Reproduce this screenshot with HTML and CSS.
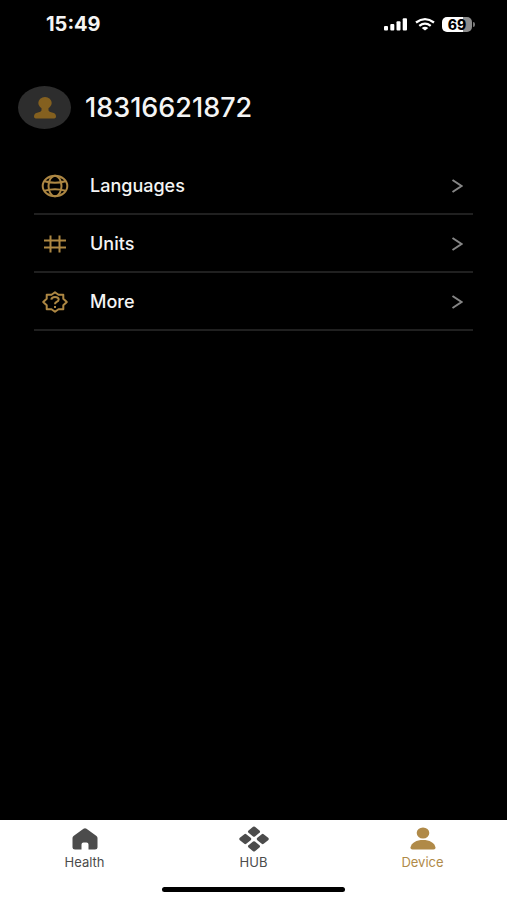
FILE: index.html
```html
<!DOCTYPE html>
<html lang="en">
<head>
<meta charset="utf-8">
<meta name="viewport" content="width=device-width, initial-scale=1">
<title>Device</title>
<link rel="stylesheet" href="styles.css">
</head>
<body>
<div class="app">
  <header class="status">
    <time class="clock">15:49</time>
    <div class="indicators">
      <svg width="25" height="14" viewBox="0 0 25 14" fill="#fff" aria-hidden="true"><rect x="1" y="9" width="4" height="4.500" rx="1"/><rect x="7.300" y="7" width="4" height="6.500" rx="1"/><rect x="13.500" y="4.300" width="4" height="9.200" rx="1"/><rect x="19.700" y="1.300" width="4.300" height="12.200" rx="1"/></svg>
      <svg width="20" height="14" viewBox="0 0 20 14" fill="none" stroke="#fff" stroke-width="2.300" aria-hidden="true"><path d="M1 5.500Q10-1.300 19 5.500"/><path d="M4.300 8.800Q10 4.400 15.700 8.800"/><path d="M10 13.600L6.700 10.900Q10 8.600 13.300 10.900Z" fill="#fff" stroke="none"/></svg>
      <div class="battery"><span class="level">69</span><i class="cap"></i></div>
    </div>
  </header>

  <main class="content">
    <section class="profile">
      <div class="avatar">
        <svg width="24" height="24" viewBox="0 0 24 24" fill="#84601f" aria-hidden="true"><ellipse cx="12" cy="7" rx="6.700" ry="6"/><path d="M8.500 10H15.500V14.500Q16 16 19 16.500Q23 17.200 23 20.500Q23 22.500 20 22.500H4Q1 22.500 1 20.500Q1 17.200 5 16.500Q8 16 8.500 14.500Z"/></svg>
      </div>
      <h1 class="account">18316621872</h1>
    </section>

    <nav class="menu" aria-label="Settings">
      <a class="row" href="#languages">
        <svg class="icon" width="28" height="24" viewBox="0 0 28 24" aria-hidden="true"><ellipse cx="14" cy="12" rx="12.300" ry="10.300"/><ellipse cx="14" cy="12" rx="6.500" ry="10.300"/><path d="M3.500 7.300Q14 10.300 24.500 7.300M3.500 16.700Q14 13.700 24.500 16.700"/></svg>
        <span class="label">Languages</span>
        <svg class="chevron" width="12" height="14" viewBox="0 0 12 14" aria-hidden="true"><path d="M1.500 1L10.500 7L1.500 13"/></svg>
      </a>
      <a class="row" href="#units">
        <svg class="icon" width="28" height="24" viewBox="0 0 28 24" aria-hidden="true"><path d="M9.500 3.500V20.500M18.500 3.500V20.500M3 8.500H25M3 15.500H25"/></svg>
        <span class="label">Units</span>
        <svg class="chevron" width="12" height="14" viewBox="0 0 12 14" aria-hidden="true"><path d="M1.500 1L10.500 7L1.500 13"/></svg>
      </a>
      <a class="row" href="#more">
        <svg class="icon" width="28" height="24" viewBox="0 0 28 24" stroke-linejoin="round" aria-hidden="true"><path d="M14 2.300L17.500 4.700H22.300V8.800L25.800 12L22.300 15.200V19.300H17.500L14 21.700L10.500 19.300H5.700V15.200L2.200 12L5.700 8.800V4.700H10.500Z"/><path d="M10.300 9.700Q10.600 7 14 7Q17.700 7 17.700 9.600Q17.700 11.200 15.500 12Q14 12.600 14 14.200M14 16V18"/></svg>
        <span class="label">More</span>
        <svg class="chevron" width="12" height="14" viewBox="0 0 12 14" aria-hidden="true"><path d="M1.500 1L10.500 7L1.500 13"/></svg>
      </a>
    </nav>
  </main>

  <footer class="dock">
    <nav class="tabs" aria-label="Main">
      <a class="tab" href="#health">
        <svg width="28" height="24" viewBox="0 0 28 24" aria-hidden="true"><path d="M12.500 1.800Q14 .6 15.500 1.800L25.500 9Q26.500 9.800 26.500 11V20.500Q26.500 22.500 24 22.500H17.500V17.500Q17.500 15.500 15.500 15.500H12.500Q10.500 15.500 10.500 17.500V22.500H4Q1.500 22.500 1.500 20.500V11Q1.500 9.800 2.500 9Z"/></svg>
        <span>Health</span>
      </a>
      <a class="tab" href="#hub">
        <svg width="30" height="26" viewBox="0 0 30 26" stroke-width="3" stroke-linejoin="round" stroke="currentColor" aria-hidden="true"><path d="M15 2L19.500 5.700L15 9.300L10.500 5.700ZM6.300 9.300L10.700 13L6.300 16.700L1.800 13ZM23.700 9.300L28.200 13L23.700 16.700L19.300 13ZM15 16.700L19.500 20.300L15 24L10.500 20.300Z"/></svg>
        <span>HUB</span>
      </a>
      <a class="tab active" href="#device" aria-current="page">
        <svg width="28" height="24" viewBox="0 0 28 24" aria-hidden="true"><ellipse cx="14" cy="6" rx="6.300" ry="5.500"/><path d="M1.500 20.500C2.500 15.500 7.500 13 14 13S25.500 15.500 26.500 20.500Q26.800 22.500 24.500 22.500H3.500Q1.200 22.500 1.500 20.500Z"/></svg>
        <span>Device</span>
      </a>
    </nav>
    <div class="home-bar"></div>
  </footer>
</div>
</body>
</html>
```
FILE: styles.css
```css
* {
  box-sizing: border-box;
}

body {
  margin: 0;
  background: #000;
  color: #f4f4f4;
  font-family: Inter, "Liberation Sans", sans-serif;
}

a {
  color: inherit;
  text-decoration: none;
}

svg {
  display: block;
  flex: none;
}

.app {
  display: flex;
  flex-direction: column;
  min-height: 100vh;
}

.status {
  display: flex;
  align-items: center;
  justify-content: space-between;
  height: 48px;
  padding: 0 32px 0 46px;
}

.clock {
  font-size: 20px;
  font-weight: 700;
  line-height: 24px;
}

.indicators {
  display: flex;
  align-items: center;
  gap: 7px;
}

.battery {
  display: flex;
  align-items: center;
  gap: 1px;
}

.level {
  width: 30px;
  border-radius: 5px;
  background: linear-gradient(90deg, #fff 69%, #8c8c8c 69%);
  color: #000;
  font-size: 14px;
  font-weight: 800;
  line-height: 15px;
  text-align: center;
}

.cap {
  width: 2px;
  height: 5px;
  border-radius: 0 2px 2px 0;
  background: #777;
}

.content {
  flex: 1;
  padding: 38px 34px 0;
}

.profile {
  display: flex;
  align-items: center;
  gap: 14px;
  margin-left: -16px;
}

.avatar {
  display: grid;
  place-items: center;
  width: 53px;
  height: 43px;
  border-radius: 50%;
  background: #2d2d2d;
}

.account {
  margin: 0;
  font-size: 27px;
  font-weight: 500;
  line-height: 32px;
}

.menu {
  margin-top: 28px;
}

.row {
  display: flex;
  align-items: center;
  height: 58px;
  padding: 2px 10px 0 7px;
  border-bottom: 2px solid #202020;
}

.icon {
  fill: none;
  stroke: #ad8743;
  stroke-width: 2;
}

.label {
  flex: 1;
  margin-left: 21px;
  font-size: 18px;
  font-weight: 500;
  line-height: 24px;
}

.chevron {
  fill: none;
  stroke: #858585;
  stroke-width: 2;
}

.dock {
  height: 80px;
  background: #fff;
}

.tabs {
  display: grid;
  grid-template-columns: repeat(3, 1fr);
  height: 67px;
  padding-top: 6px;
}

.tab {
  display: grid;
  grid-template-rows: 26px 20px;
  place-items: center;
  align-content: start;
  color: #4c4c4c;
  fill: currentColor;
  font-size: 13px;
  line-height: 20px;
}

.active {
  color: #b08a48;
}

.home-bar {
  width: 36%;
  height: 5px;
  margin: 0 auto;
  border-radius: 3px;
  background: #000;
}
```
